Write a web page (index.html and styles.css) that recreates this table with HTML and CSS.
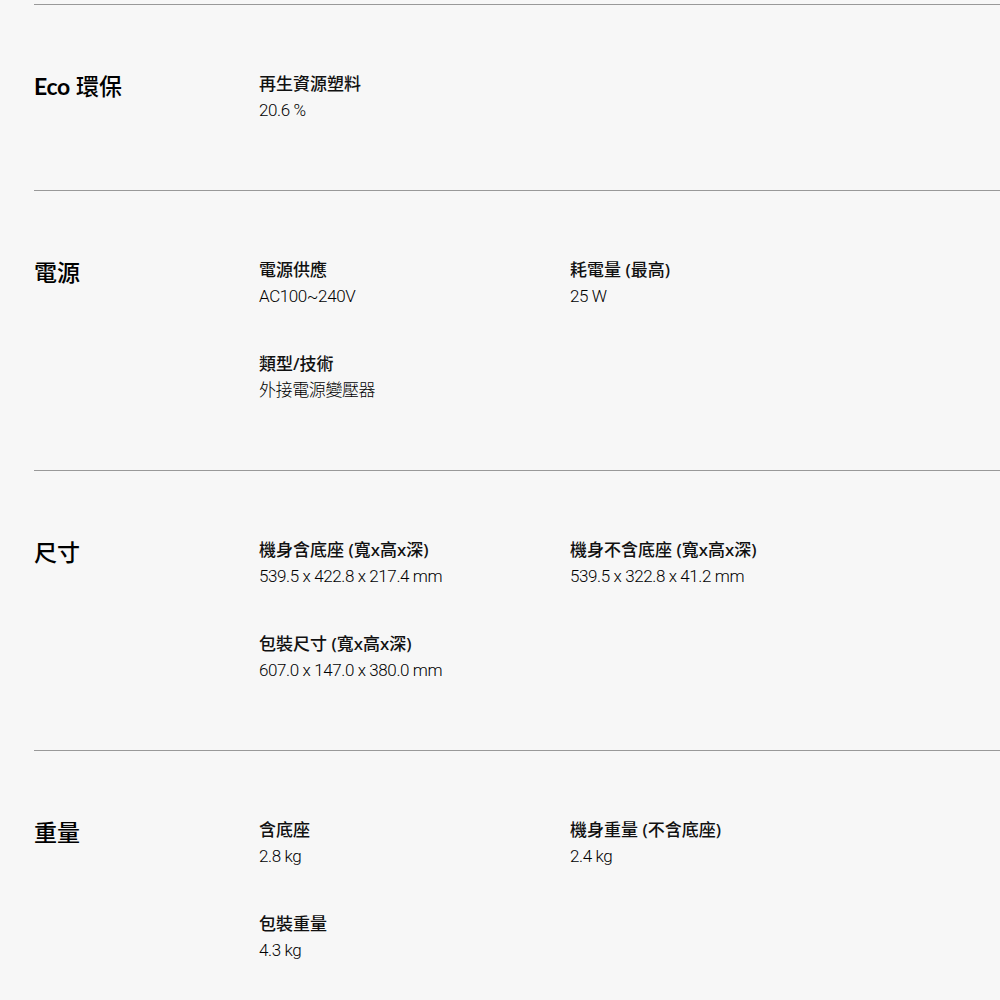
FILE: index.html
```html
<!DOCTYPE html>
<html lang="zh-Hant">
<head>
<meta charset="utf-8">
<title>Specs</title>
<link rel="stylesheet" href="styles.css">
</head>
<body>
<div class="specs">
  <section class="spec">
    <h2 class="spec-title"><span class="eco">Eco</span> 環保</h2>
    <div class="spec-items">
      <div class="item"><div class="label">再生資源塑料</div><div class="value">20.6 %</div></div>
    </div>
  </section>
  <section class="spec">
    <h2 class="spec-title">電源</h2>
    <div class="spec-items">
      <div class="item"><div class="label">電源供應</div><div class="value">AC100~240V</div></div>
      <div class="item"><div class="label">耗電量 (最高)</div><div class="value">25 W</div></div>
      <div class="item"><div class="label">類型/技術</div><div class="value">外接電源變壓器</div></div>
    </div>
  </section>
  <section class="spec">
    <h2 class="spec-title">尺寸</h2>
    <div class="spec-items">
      <div class="item"><div class="label">機身含底座 (寬x高x深)</div><div class="value">539.5 x 422.8 x 217.4 mm</div></div>
      <div class="item"><div class="label">機身不含底座 (寬x高x深)</div><div class="value">539.5 x 322.8 x 41.2 mm</div></div>
      <div class="item"><div class="label">包裝尺寸 (寬x高x深)</div><div class="value">607.0 x 147.0 x 380.0 mm</div></div>
    </div>
  </section>
  <section class="spec">
    <h2 class="spec-title">重量</h2>
    <div class="spec-items">
      <div class="item"><div class="label">含底座</div><div class="value">2.8 kg</div></div>
      <div class="item"><div class="label">機身重量 (不含底座)</div><div class="value">2.4 kg</div></div>
      <div class="item"><div class="label">包裝重量</div><div class="value">4.3 kg</div></div>
    </div>
  </section>
</div>
</body>
</html>
```

FILE: styles.css
```css
html, body {
  margin: 0;
  padding: 0;
  background: #f7f7f7;
}
body {
  font-family: "Roboto", "Noto Sans CJK TC", sans-serif;
  color: #000;
}
.specs {
  padding: 4px 0 0 34px;
}
.spec {
  display: grid;
  grid-template-columns: 225px 1fr;
  border-top: 1px solid #999;
  padding: 66px 0 67px;
}
.spec-title {
  margin: 0;
  font-family: "Noto Sans", "Noto Sans CJK TC", sans-serif;
  font-size: 23px;
  font-weight: 500;
  line-height: 30px;
  color: #000;
}
.eco {
  font-family: "Lato", "Noto Sans", sans-serif;
  font-weight: 700;
  letter-spacing: -0.3px;
}
.spec-items {
  display: grid;
  grid-template-columns: 311px 311px;
  row-gap: 42px;
}
.label {
  font-family: "Noto Sans", "Noto Sans CJK TC", sans-serif;
  font-size: 17px;
  font-weight: 500;
  line-height: 26px;
  color: #111;
}
.value {
  font-family: "Roboto", "Noto Sans CJK TC", sans-serif;
  font-size: 17px;
  font-weight: 300;
  line-height: 26px;
  letter-spacing: -0.4px;
  color: #000;
}
```
